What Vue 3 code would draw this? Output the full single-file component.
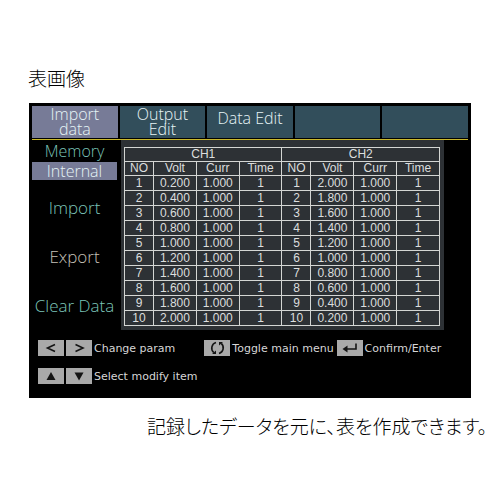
<script setup>
  import { ref } from 'vue';

  const tabs = ['Import data', 'Output Edit', 'Data Edit', '', ''];
  const actions = ['Import', 'Export', 'Clear Data'];
  const activeTab = ref(0);

  const channels = ['CH1', 'CH2'];
  const columns = ['NO', 'Volt', 'Curr', 'Time'];
  const rows = Array.from({ length: 10 }, (_, i) => [
    i + 1, ((i + 1) * 0.2).toFixed(3), '1.000', 1,
    i + 1, ((10 - i) * 0.2).toFixed(3), '1.000', 1,
  ]);
</script>

<template>
  <main class="page">
    <h1 class="title">表画像</h1>

    <section class="screen">
      <nav class="tabs">
        <button
          v-for="(tab, i) in tabs"
          :key="i"
          type="button"
          class="tabs__btn"
          :class="{ 'tabs__btn--active': activeTab === i }"
          @click="activeTab = i"
        ><span class="tabs__label">{{ tab }}</span></button>
      </nav>

      <div class="content">
        <aside class="menu">
          <span class="menu__title">Memory</span>
          <button type="button" class="menu__source">Internal</button>
          <button
            v-for="action in actions"
            :key="action"
            type="button"
            class="menu__btn"
            :class="{ 'menu__btn--light': action === 'Export' }"
          >{{ action }}</button>
        </aside>

        <div class="panel">
          <table class="data">
            <colgroup v-for="ch in channels" :key="ch">
              <col class="data__no"><col><col><col>
            </colgroup>
            <thead>
              <tr>
                <th v-for="ch in channels" :key="ch" colspan="4">{{ ch }}</th>
              </tr>
              <tr>
                <template v-for="ch in channels" :key="ch">
                  <th v-for="col in columns" :key="col">{{ col }}</th>
                </template>
              </tr>
            </thead>
            <tbody>
              <tr v-for="(row, i) in rows" :key="i">
                <td v-for="(cell, j) in row" :key="j">{{ cell }}</td>
              </tr>
            </tbody>
          </table>
        </div>
      </div>

      <footer class="hints">
        <div class="hints__row">
          <div class="hint">
            <button type="button" class="key" aria-label="Left">
              <svg viewBox="0 0 26 16"><path d="M17 4.5 9.5 8l7.5 3.5" /></svg>
            </button>
            <button type="button" class="key" aria-label="Right">
              <svg viewBox="0 0 26 16"><path d="M9.5 4.5 17 8l-7.5 3.5" /></svg>
            </button>
            <span>Change param</span>
          </div>
          <div class="hint hint--toggle">
            <button type="button" class="key" aria-label="Toggle">
              <svg viewBox="0 0 26 16">
                <path d="M12 2.6A5.8 5.8 0 0 0 9.8 12.6M15 13.4A5.8 5.8 0 0 0 17.2 3.4" />
                <path class="key__fill" d="M8 14h4V10.5zM19 2h-4v3.5z" />
              </svg>
            </button>
            <span>Toggle main menu</span>
          </div>
          <div class="hint">
            <button type="button" class="key" aria-label="Enter">
              <svg viewBox="0 0 26 16">
                <path d="M19 3.5V9H9" />
                <path class="key__fill" d="M5.5 9l5-3.5v7z" />
              </svg>
            </button>
            <span>Confirm/Enter</span>
          </div>
        </div>
        <div class="hints__row">
          <div class="hint">
            <button type="button" class="key" aria-label="Up">
              <svg viewBox="0 0 26 16"><path class="key__fill" d="M13 4l4.5 8h-9z" /></svg>
            </button>
            <button type="button" class="key" aria-label="Down">
              <svg viewBox="0 0 26 16"><path class="key__fill" d="M13 12.5l4.5-8h-9z" /></svg>
            </button>
            <span>Select modify item</span>
          </div>
        </div>
      </footer>
    </section>

    <p class="caption">記録したデータを元に、表を作成できます。</p>
  </main>
</template>

<style>
body {
  background-color: white;
}
</style>

<style scoped>
* {
  box-sizing: border-box;
}

.page {
  padding: 64px 0 0 28px;
  font-family: "Open Sans", "Noto Sans CJK JP", sans-serif;
  color: black;
}

button {
  padding: 0;
  font: inherit;
  color: inherit;
  background: none;
  border: none;
  cursor: pointer;
}

.title,
.caption {
  margin: 0;
  font-family: "Noto Sans CJK JP", sans-serif;
  font-size: 19px;
  font-weight: 300;
  font-feature-settings: "palt";
  line-height: 28px;
}

.screen {
  margin: 11px 29px 0 1px;
  padding: 3px 3px 14px;
  background-color: black;
}

.tabs {
  display: grid;
  grid-template-columns: repeat(5, 1fr);
  gap: 2px;
  padding-bottom: 1px;
  border-bottom: 1px solid #c9b82c;
}

.tabs__btn {
  display: flex;
  justify-content: center;
  height: 32px;
  padding-top: 1px;
  font-size: 16px;
  font-weight: 300;
  line-height: 15px;
  color: #e6f4f6;
  background-color: #324e5b;
}

.tabs__btn:nth-child(3) {
  padding-top: 5px;
}

.tabs__btn--active {
  background-color: #777b97;
}

.tabs__label {
  max-width: 64px;
}

.tabs__btn:nth-child(3) .tabs__label {
  max-width: none;
}

.content {
  display: flex;
}

.menu {
  display: flex;
  flex-direction: column;
  width: 89px;
  padding-right: 4px;
  font-size: 17px;
  font-weight: 300;
  color: #7cc4b8;
  text-align: center;
}

.menu__title {
  font-size: 16px;
  line-height: 22px;
}

.menu__source {
  height: 18px;
  font-size: 16px;
  line-height: 16px;
  color: #e6f4f6;
  background-color: #777b97;
}

.menu__btn {
  height: 49px;
}

.menu__source + .menu__btn {
  margin-top: 3px;
}

.menu__btn--light {
  color: #c6c0b8;
}

.panel {
  flex: 1;
  margin-right: 24px;
  padding: 7px 4px 4px 3px;
  background-color: #2d3135;
}

.data {
  width: 100%;
  height: 179px;
  border-collapse: collapse;
  table-layout: fixed;
  font-family: "Liberation Sans", sans-serif;
  font-size: 12px;
  line-height: 13px;
  color: #dcdede;
}

.data__no {
  width: 29px;
}

.data th,
.data td {
  padding: 0;
  font-weight: 400;
  text-align: center;
  border: 1px solid #d4d6d4;
}

.hints {
  padding: 10px 0 0 6px;
  font-family: "DejaVu Sans", sans-serif;
  font-size: 11px;
  color: #d6d6d6;
}

.hints__row {
  display: flex;
  gap: 3px;
}

.hints__row + .hints__row {
  margin-top: 12px;
}

.hint {
  display: flex;
  align-items: center;
  gap: 2px;
  white-space: nowrap;
}

.hint--toggle {
  margin-left: 26px;
}

.key {
  width: 26px;
  height: 16px;
  color: #141414;
  background-color: #a9a9a9;
}

.key svg {
  display: block;
  fill: none;
  stroke: currentColor;
  stroke-width: 1.6;
}

.key .key__fill {
  fill: currentColor;
  stroke: none;
}

.caption {
  margin-top: 14px;
  padding-right: 13px;
  text-align: right;
}
</style>
